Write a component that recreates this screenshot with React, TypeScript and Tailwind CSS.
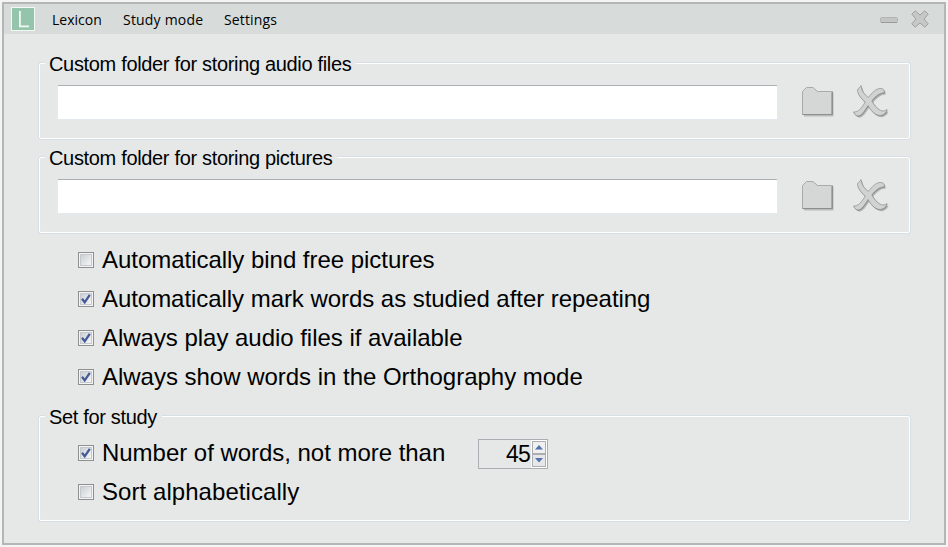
import type { ReactNode } from "react";

function Group({ title, titleClass, className, children }: { title: string; titleClass: string; className: string; children: ReactNode }) {
  return (
    <section className={`ml-[34px] w-[873px] rounded-[3px] border border-[#d5dfe5] ${className}`}>
      <div className="h-full rounded-[2px] border border-white">
        <div className="-mt-[13px] ml-[5px] flex h-[26px]">
          <h2 className={`whitespace-nowrap bg-[#e5e8e7] pl-[4px] pr-[5px] text-[20px] leading-[26px] ${titleClass}`}>{title}</h2>
        </div>
        {children}
      </div>
    </section>
  );
}

function FolderIcon() {
  return (
    <svg width="36" height="34" viewBox="0 0 36 34" fill="none">
      <path d="M4 31.500V7.500L7.500 4H15L19 7.500H33.500V31.500Z" fill="#b8bbba" />
      <path d="M2.500 29.500V6.500L6.500 2.500H13L17.500 6.500H31.500V29.500Z" fill="#d5d7d6" stroke="#a8abaa" />
      <path d="M2.500 29.500H32.500V6.500" stroke="#8c8f8e" />
    </svg>
  );
}

function ScriptCross() {
  const shape =
    "M8 0.500C8.500 6 11.500 9.500 15.500 12.500C19 7.500 23.500 3.500 27 3.500C30 3.500 32 4.500 31 8C27.500 7.500 22.500 11 18.800 16C22 21.500 26.500 26 30 26C32 26 33 25 34 24.500C33.500 28 30 30.500 27 30.500C22 30.500 17.500 25 15 20.500C12 25.500 8.500 31 5 31C3 31 1 28.500 0.500 27C5 27.500 9 23 12.200 17C8 13.500 4.500 9 4.500 5C5.500 2.500 7 3 8 0.500Z";
  return (
    <svg width="37" height="35" viewBox="0 0 37 35" fill="none">
      <path d={shape} fill="#b8bbba" transform="translate(1.500 1.800)" />
      <path d={shape} fill="#858887" transform="translate(0.500 0.800)" />
      <path d={shape} fill="#d1d3d2" stroke="#929594" strokeWidth="0.8" />
    </svg>
  );
}

function FolderRow() {
  return (
    <div className="ml-[17px] mt-[8px] flex items-start">
      <div className="h-[35px] w-[721px] rounded-[2px] border border-[#e3e9ef] border-t-[#abadb3] bg-white" />
      <button className="ml-[22px]" aria-label="Browse"><FolderIcon /></button>
      <button className="ml-[17px]" aria-label="Clear"><ScriptCross /></button>
    </div>
  );
}

function CheckRow({ label, checked, textClass }: { label: string; checked?: boolean; textClass: string }) {
  return (
    <label className="flex h-[39px] items-center">
      <span className="flex size-4 shrink-0 items-center justify-center border border-[#8e8f8f] bg-[#f4f4f4]">
        <span className="flex size-3 items-center justify-center border border-[#c5c9ce] bg-linear-to-br from-[#cbcfd5] to-[#f6f6f6]">
          {checked && (
            <svg width="10" height="10" viewBox="0 0 10 10" className="shrink-0" fill="none">
              <path d="M1 4.800L3.700 8.300L8.800 0.800" stroke="#465a96" strokeWidth="2.300" />
            </svg>
          )}
        </span>
      </span>
      <span className={`ml-2 whitespace-nowrap text-[24px] leading-[39px] ${textClass}`}>{label}</span>
    </label>
  );
}

function Spinner() {
  return (
    <div className="flex h-[30px] w-[70px] border border-[#abadb3]">
      <span className="flex-1 pr-px text-right text-[23px] leading-[28px] tracking-[-0.8px]">45</span>
      <div className="flex w-[16px] flex-col bg-white p-px">
        <div className="flex h-[13px] items-center justify-center border border-[#abadb3] bg-[#eff0f0]">
          <svg width="8" height="5" viewBox="0 0 8 5"><path d="M4 0L8 4.500H0Z" fill="#5670b0" /></svg>
        </div>
        <div className="flex h-[13px] items-center justify-center border border-[#abadb3] bg-[#e6e7e8]">
          <svg width="8" height="5" viewBox="0 0 8 5"><path d="M4 4.500L0 0H8Z" fill="#5670b0" /></svg>
        </div>
      </div>
    </div>
  );
}

export default function App() {
  return (
    <div className="h-[547px] w-[948px] bg-[#f4f4f4] pl-[2px] pt-[2px] font-['Liberation_Sans',Arial,sans-serif] text-black">
      <main className="h-[543px] w-[944px] border-2 border-[#b4b6b5] bg-[#e5e8e7]">
        <header className="flex h-[30px] items-center bg-[#d7dbda] pl-[7px]">
          <svg width="24" height="24" viewBox="0 0 24 24" fill="none">
            <rect x="0.500" y="0.500" width="23" height="23" fill="#94c5aa" stroke="#f4f8f5" />
            <path d="M8.900 4V19.300H18" stroke="#f4f8f5" strokeWidth="1.800" />
          </svg>
          <nav className="flex flex-1 pt-[2px] font-['Open_Sans',sans-serif] text-[14px] leading-[20px]">
            <span className="ml-[17px] w-[71px]">Lexicon</span>
            <span className="w-[101px] tracking-[0.200px]">Study mode</span>
            <span className="tracking-[0.150px]">Settings</span>
          </nav>
          <svg width="18" height="6" viewBox="0 0 18 6" className="mr-[13px] mt-px">
            <rect x="0.500" y="0.500" width="17" height="5" rx="1" fill="#c2c5c4" stroke="#b1b4b3" />
            <path d="M1 5.500H17" stroke="#989b9a" />
          </svg>
          <svg width="18" height="18" viewBox="0 0 18 18" className="mr-[15px]">
            <path d="M4.200 0.800L9 5L13.800 0.800L17.200 4.200L13 9L17.200 13.800L13.800 17.200L9 13L4.200 17.200L0.800 13.800L5 9L0.800 4.200Z" fill="#c5c8c7" stroke="#9da09f" strokeLinejoin="round" />
          </svg>
        </header>
        <Group title="Custom folder for storing audio files" titleClass="tracking-[-0.330px]" className="mt-[28px] h-[78px]"><FolderRow /></Group>
        <Group title="Custom folder for storing pictures" titleClass="tracking-[-0.330px]" className="mt-[16px] h-[78px]"><FolderRow /></Group>
        <div className="ml-[74px] mt-[6px]">
          <CheckRow label="Automatically bind free pictures" textClass="tracking-[-0.030px]" />
          <CheckRow label="Automatically mark words as studied after repeating" checked textClass="tracking-[-0.050px]" />
          <CheckRow label="Always play audio files if available" checked textClass="tracking-[-0.030px]" />
          <CheckRow label="Always show words in the Orthography mode" checked textClass="tracking-[-0.020px]" />
        </div>
        <Group title="Set for study" titleClass="tracking-[-0.330px]" className="mt-[19px] h-[107px]">
          <div className="-mt-[1px] ml-[38px] flex items-start pt-[4px]">
            <div className="w-[400px]"><CheckRow label="Number of words, not more than" checked textClass="tracking-[-0.030px]" /></div>
            <div className="pt-[6px]"><Spinner /></div>
          </div>
          <div className="ml-[38px]"><CheckRow label="Sort alphabetically" textClass="tracking-[0.060px]" /></div>
        </Group>
      </main>
    </div>
  );
}
